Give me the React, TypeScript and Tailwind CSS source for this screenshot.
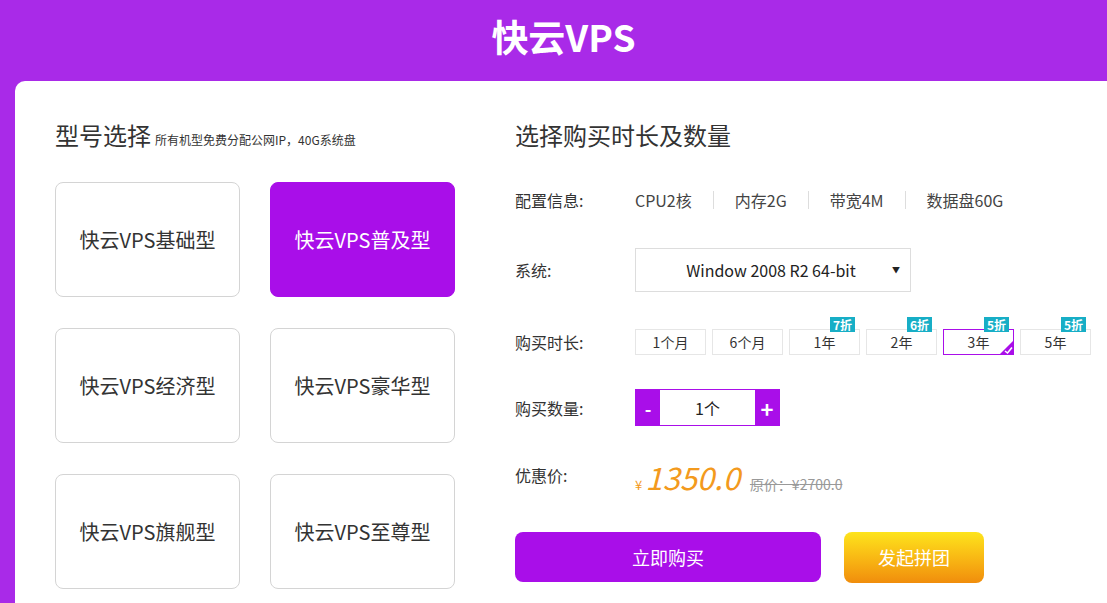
import React, { useState } from 'react';

const models = ['基础型', '普及型', '经济型', '豪华型', '旗舰型', '至尊型'];

const durations = [
    { label: '1个月' },
    { label: '6个月' },
    { label: '1年', badge: '7折' },
    { label: '2年', badge: '6折' },
    { label: '3年', badge: '5折' },
    { label: '5年', badge: '5折' },
];

const specs = ['CPU2核', '内存2G', '带宽4M', '数据盘60G'];

function Label({ children }: { children: React.ReactNode }) {
    return <div className="w-[120px] shrink-0 text-[16px] text-[#333]">{children}</div>;
}

export default function App() {
    const [model, setModel] = useState(1);
    const [duration, setDuration] = useState(4);
    const [qty, setQty] = useState(1);

    return (
        <div className="min-h-[603px] bg-[#a92ae8] font-['Noto_Sans_CJK_SC',sans-serif] text-[#333] overflow-hidden">
            <div className="h-[81px] pt-[13px] pl-[20px] text-center">
                <h1 className="text-[37px] leading-[46px] font-bold text-white">快云VPS</h1>
            </div>

            <div className="ml-[15px] w-[1100px] min-h-[522px] bg-white rounded-tl-[10px] pt-[39px] pl-[40px] flex gap-[60px]">
                {/* left: model list */}
                <div className="w-[400px] shrink-0">
                    <div className="flex items-baseline h-[30px]">
                        <span className="text-[24px] leading-[30px] text-[#333]">型号选择</span>
                        <span className="ml-[4px] text-[12px] text-[#333]">所有机型免费分配公网IP，40G系统盘</span>
                    </div>
                    <div className="mt-[32px] grid grid-cols-[185px_185px] gap-x-[30px] gap-y-[31px]">
                        {models.map((m, i) => (
                            <button
                                key={m}
                                onClick={() => setModel(i)}
                                className={
                                    i === model
                                        ? 'h-[115px] rounded-[8px] bg-[#a90ee9] text-white text-[20px] border border-[#a90ee9]'
                                        : 'h-[115px] rounded-[8px] bg-white text-[#333] text-[20px] border border-[#d4d4d4]'
                                }
                            >
                                快云VPS{m}
                            </button>
                        ))}
                    </div>
                </div>

                {/* right: purchase options */}
                <div className="flex-1">
                    <div className="h-[30px] text-[24px] leading-[30px] text-[#333]">选择购买时长及数量</div>

                    <div className="mt-[28px] h-[44px] flex items-center">
                        <Label>配置信息:</Label>
                        <div className="flex items-center text-[16px] text-[#444]">
                            {specs.map((s, i) => (
                                <React.Fragment key={s}>
                                    {i > 0 && <span className="mx-[21px] h-[18px] w-px bg-[#dddddd]" />}
                                    <span>{s}</span>
                                </React.Fragment>
                            ))}
                        </div>
                    </div>

                    <div className="mt-[26px] h-[44px] flex items-center">
                        <Label>系统:</Label>
                        <div className="relative w-[276px] h-[44px] border border-[#dddddd] flex items-center justify-center text-[16px] text-[#222]">
                            <span className="pr-[4px]">Window 2008 R2 64-bit</span>
                            <span className="absolute right-[10px] top-[15px] text-[8px] text-[#222]">▼</span>
                        </div>
                    </div>

                    <div className="mt-[37px] h-[26px] flex items-center">
                        <Label>购买时长:</Label>
                        <div className="flex gap-[6px]">
                            {durations.map((d, i) => (
                                <button
                                    key={d.label}
                                    onClick={() => setDuration(i)}
                                    className={
                                        i === duration
                                            ? 'relative w-[71px] h-[26px] border border-[#a90ee9] text-[14px] text-[#333]'
                                            : 'relative w-[71px] h-[26px] border border-[#e6e6e6] text-[14px] text-[#333]'
                                    }
                                >
                                    {d.label}
                                    {d.badge && (
                                        <span className="absolute right-[4px] -top-[13px] h-[15px] px-[3px] bg-[#17aec6] text-white text-[12px] leading-[15px] font-bold">
                                            {d.badge}
                                        </span>
                                    )}
                                    {i === duration && (
                                        <svg className="absolute -right-px -bottom-px" width="15" height="15" viewBox="0 0 15 15">
                                            <path d="M15 0 L15 15 L0 15 Z" fill="#a90ee9" />
                                            <path d="M6 11 L8.5 13 L13 7.5" stroke="#fff" strokeWidth="1.6" fill="none" />
                                        </svg>
                                    )}
                                </button>
                            ))}
                        </div>
                    </div>

                    <div className="mt-[34px] h-[37px] flex items-center">
                        <Label>购买数量:</Label>
                        <div className="flex h-[37px] border border-[#a90ee9]">
                            <button
                                onClick={() => setQty(Math.max(1, qty - 1))}
                                className="w-[24px] bg-[#a90ee9] text-white text-[18px] font-bold leading-none"
                            >
                                -
                            </button>
                            <div className="w-[95px] flex items-center justify-center text-[16px] text-[#222]">{qty}个</div>
                            <button
                                onClick={() => setQty(qty + 1)}
                                className="w-[24px] bg-[#a90ee9] text-white text-[22px] font-bold leading-none"
                            >
                                +
                            </button>
                        </div>
                    </div>

                    <div className="mt-[34px] flex items-start">
                        <div className="w-[120px] shrink-0 h-[30px] leading-[30px] text-[16px] text-[#333]">优惠价:</div>
                        <div className="-mt-[1px] flex items-baseline text-[#f39a1d]">
                            <span className="text-[13px]">¥</span>
                            <span className="ml-[3px] text-[31px] italic leading-[36px]">{(1350 * qty).toFixed(1)}</span>
                            <span className="ml-[10px] text-[14px] text-[#999] line-through">原价：¥{(2700 * qty).toFixed(1)}</span>
                        </div>
                    </div>

                    <div className="mt-[37px] flex gap-[23px]">
                        <button className="w-[306px] h-[50px] rounded-[8px] bg-[#a90ee9] text-white text-[18px]">立即购买</button>
                        <button className="w-[140px] h-[51px] rounded-[8px] bg-gradient-to-b from-[#fde41c] to-[#f08d0c] text-white text-[18px]">
                            发起拼团
                        </button>
                    </div>
                </div>
            </div>
        </div>
    );
}
